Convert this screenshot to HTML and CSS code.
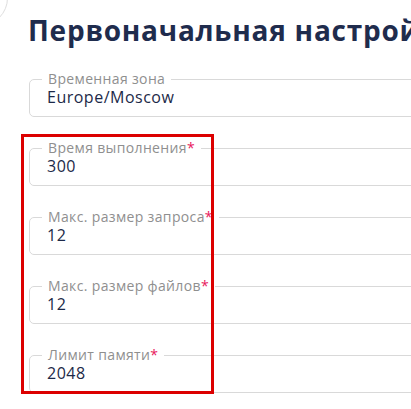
FILE: index.html
```html
<!DOCTYPE html>
<html lang="ru">
<head>
<meta charset="utf-8">
<title>Первоначальная настройка</title>
<link rel="stylesheet" href="styles.css">
</head>
<body>
<div class="back-circle"></div>
<main class="page">
  <h1 class="title">Первоначальная настройка</h1>
  <form class="form">
    <fieldset class="field">
      <legend class="field-label">Временная зона</legend>
      <div class="field-value">Europe/Moscow</div>
    </fieldset>
    <fieldset class="field">
      <legend class="field-label">Время выполнения<span class="req">*</span></legend>
      <div class="field-value">300</div>
    </fieldset>
    <fieldset class="field">
      <legend class="field-label">Макс. размер запроса<span class="req">*</span></legend>
      <div class="field-value">12</div>
    </fieldset>
    <fieldset class="field">
      <legend class="field-label">Макс. размер файлов<span class="req">*</span></legend>
      <div class="field-value">12</div>
    </fieldset>
    <fieldset class="field">
      <legend class="field-label">Лимит памяти<span class="req">*</span></legend>
      <div class="field-value">2048</div>
    </fieldset>
  </form>
</main>
<div class="highlight"></div>
</body>
</html>
```
FILE: styles.css
```css
html, body {
  margin: 0;
  padding: 0;
  background: #ffffff;
  overflow: hidden;
  width: 411px;
  height: 409px;
}
body {
  position: relative;
  font-family: "Open Sans", "Noto Sans", sans-serif;
}
.back-circle {
  position: absolute;
  left: -48px;
  top: -30px;
  width: 56px;
  height: 56px;
  border: 1px solid #dedede;
  border-radius: 50%;
  box-sizing: border-box;
}
.page {
  padding: 12px 0 0 29px;
}
.title {
  margin: 0 0 23px -1px;
  font-size: 28px;
  line-height: 36px;
  font-weight: 700;
  color: #1f2c4d;
  white-space: nowrap;
  letter-spacing: 0.75px;
}
.form {
  display: flex;
  flex-direction: column;
  gap: 23px;
}
.field {
  margin: 0;
  width: 500px;
  box-sizing: border-box;
  padding: 0 12px 9px 12px;
  border: 1px solid #d9d9d9;
  border-radius: 5px;
  min-width: 0;
}
.field-label {
  padding: 0 6px;
  font-size: 14px;
  line-height: 16px;
  letter-spacing: 0.35px;
  color: #8f8f8f;
}
.req {
  color: #e8175d;
}
.field-value {
  padding-left: 5px;
  font-size: 16px;
  line-height: 20px;
  letter-spacing: 0.5px;
  color: #1c2948;
}
.highlight {
  position: absolute;
  left: 21px;
  top: 134px;
  width: 193px;
  height: 260px;
  box-sizing: border-box;
  border: 3px solid #dc0000;
}
```
